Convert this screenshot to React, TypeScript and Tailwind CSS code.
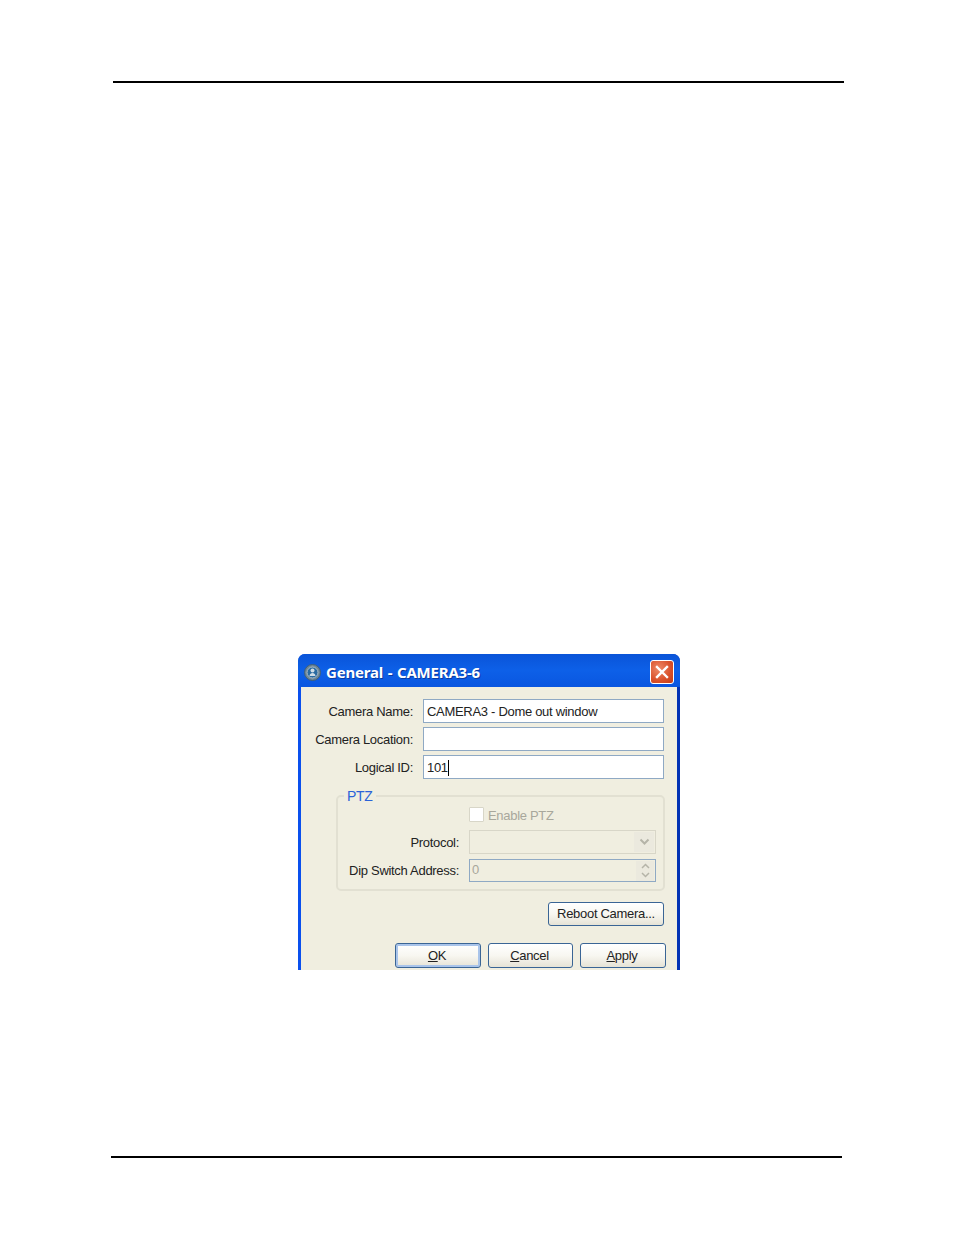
import type { ReactNode } from "react";

function AppIcon() {
  return (
    <svg width="17" height="17" viewBox="0 0 17 17" className="shrink-0">
      <circle cx="8.5" cy="8.5" r="8" fill="#6f8797" stroke="#3f5f78" />
      <circle cx="8.5" cy="8.5" r="5.5" fill="#2a6aa0" stroke="#a9bcc9" />
      <circle cx="8.5" cy="6.5" r="2" fill="#cfdde6" />
      <path d="M5.5 12c.4-2.200 1.500-3 3-3s2.600.8 3 3z" fill="#cfdde6" />
    </svg>
  );
}

function CloseButton() {
  return (
    <div className="w-[24px] h-[24px] rounded-[3px] border border-white bg-[radial-gradient(circle_at_35%_35%,#ee8a68,#d9502a_60%,#c23c18)] flex items-center justify-center">
      <svg width="14" height="14" viewBox="0 0 14 14">
        <path d="M2 2l10 10M12 2L2 12" stroke="#fff" strokeWidth="2.400" strokeLinecap="square" />
      </svg>
    </div>
  );
}

function TextField({ label, children }: { label: string; children?: ReactNode }) {
  return (
    <div className="flex items-center h-[24px]">
      <div className="w-[111px] pt-px text-right text-[#222] whitespace-nowrap">{label}</div>
      <div className="ml-[10px] w-[241px] h-[24px] bg-white border border-[#8fa9c4] pl-[3px] pt-px flex items-center text-[#222] whitespace-nowrap">
        {children}
      </div>
    </div>
  );
}

function Hotkey({ ch, rest }: { ch: string; rest: string }) {
  return (
    <span className="-ml-[2px]">
      <span className="underline">{ch}</span>
      {rest}
    </span>
  );
}

function XpButton({ width, height, focused, children }: { width: string; height: string; focused?: boolean; children: ReactNode }) {
  return (
    <div
      className={`${width} ${height} rounded-[3px] border border-[#3a6595] bg-gradient-to-b from-white via-[#f8f7f1] to-[#e6e3d6] flex items-center justify-center text-[#222] whitespace-nowrap ${
        focused ? "shadow-[inset_0_0_0_2px_#a9c4ea]" : ""
      }`}
    >
      {children}
    </div>
  );
}

export default function App() {
  return (
    <div className="w-[954px] h-[1235px] bg-white overflow-hidden font-['Liberation_Sans',sans-serif] text-[13px] tracking-[-0.3px]">
      <div className="ml-[113px] mt-[81px] w-[731px] h-[2px] bg-black" />

      <div className="ml-[298px] mt-[571px] w-[382px] h-[316px] overflow-hidden rounded-t-[7px] bg-gradient-to-r from-[#0a50ee] to-[#0332b4] flex flex-col">
        <div className="h-[33px] shrink-0 bg-gradient-to-b from-[#0a54d8] via-[#0d60e8] to-[#0a56e0] flex items-center pt-[3px] pl-[6px] pr-[6px]">
          <AppIcon />
          <div className="ml-[5px] text-white font-bold text-[15px] tracking-[-0.2px] [word-spacing:1px] whitespace-nowrap font-['Noto_Sans',sans-serif] [text-shadow:1px_1px_0_#0a3aa0]">
            General - CAMERA3-6
          </div>
          <div className="ml-auto">
            <CloseButton />
          </div>
        </div>

        <div className="mx-[3px] flex-1 bg-[#f0eee0] pt-[12px] pl-[1px]">
          <div className="flex flex-col gap-[4px]">
            <TextField label="Camera Name:">CAMERA3 - Dome out window</TextField>
            <TextField label="Camera Location:" />
            <TextField label="Logical ID:">
              101<span className="inline-block w-px h-[16px] bg-black" />
            </TextField>
          </div>

          <div className="relative ml-[34px] mt-[16px] w-[329px] h-[96px] border-2 border-[#e2e0d2] rounded-[5px] pl-[131px] pt-[10px]">
            <div className="absolute left-[6px] -top-[11px] px-[3px] bg-[#f0eee0] text-[#2a62d8] text-[14px]">PTZ</div>

            <div className="flex items-center h-[15px]">
              <div className="w-[15px] h-[15px] bg-white border border-[#d8d6c8] rounded-[1px]" />
              <div className="ml-[4px] mt-[2px] text-[#a8a79c]">Enable PTZ</div>
            </div>

            <div className="flex items-center h-[24px] mt-[8px] -ml-[131px]">
              <div className="w-[121px] pt-px text-right text-[#222]">Protocol:</div>
              <div className="ml-[10px] w-[187px] h-[24px] border border-[#d8d6c8] bg-[#f0eee0] flex items-center justify-end pr-px">
                <div className="w-[20px] h-[20px] bg-[#ebe9de] flex items-center justify-center">
                  <svg width="11" height="8" viewBox="0 0 11 8">
                    <path d="M1.500 1.500l4 4 4-4" fill="none" stroke="#b5b4a8" strokeWidth="2" />
                  </svg>
                </div>
              </div>
            </div>

            <div className="flex items-center h-[23px] mt-[5px] -ml-[131px]">
              <div className="w-[121px] text-right text-[#222] whitespace-nowrap">Dip Switch Address:</div>
              <div className="ml-[10px] w-[187px] h-[23px] border border-[#8fa9c4] bg-[#f0eee0] flex items-center justify-between pl-[2px] pr-px text-[#a8a79c]">
                <span className="-mt-[2px]">0</span>
                <div className="w-[18px] h-[20px] bg-[#ebe9de] flex flex-col items-center justify-center gap-[3px]">
                  <svg width="9" height="6" viewBox="0 0 9 6">
                    <path d="M1 5l3.500-3.500L8 5" fill="none" stroke="#b5b4a8" strokeWidth="1.500" />
                  </svg>
                  <svg width="9" height="6" viewBox="0 0 9 6">
                    <path d="M1 1l3.500 3.500L8 1" fill="none" stroke="#b5b4a8" strokeWidth="1.500" />
                  </svg>
                </div>
              </div>
            </div>
          </div>

          <div className="flex justify-end mt-[11px] pr-[13px]">
            <XpButton width="w-[116px]" height="h-[24px]">Reboot Camera...</XpButton>
          </div>

          <div className="flex justify-end gap-[7px] mt-[17px] pr-[11px]">
            <XpButton width="w-[86px]" height="h-[25px]" focused>
              <Hotkey ch="O" rest="K" />
            </XpButton>
            <XpButton width="w-[85px]" height="h-[25px]">
              <Hotkey ch="C" rest="ancel" />
            </XpButton>
            <XpButton width="w-[86px]" height="h-[25px]">
              <Hotkey ch="A" rest="pply" />
            </XpButton>
          </div>
        </div>
      </div>

      <div className="ml-[111px] mt-[186px] w-[731px] h-[2px] bg-black" />
    </div>
  );
}
